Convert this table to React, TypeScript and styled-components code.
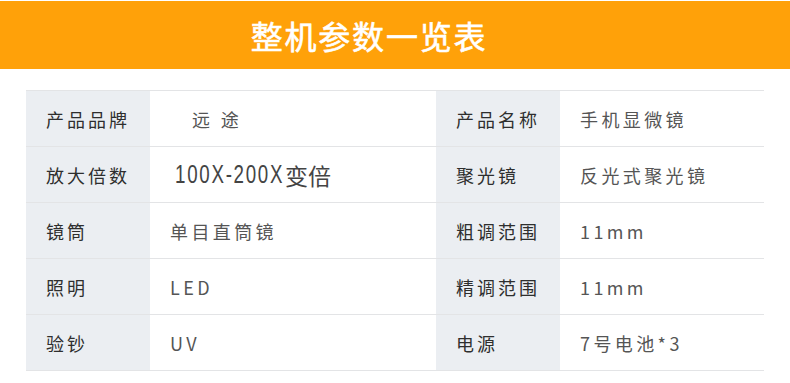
import React from 'react'
import styled, { createGlobalStyle } from 'styled-components'

const GlobalStyle = createGlobalStyle`
  html, body {
    margin: 0;
    padding: 0;
    background: #ffffff;
  }
  body {
    font-family: "Noto Sans CJK SC", "Noto Sans", sans-serif;
  }
`

const Page = styled.div`
  width: 790px;
  height: 383px;
  background: #fff;
  overflow: hidden;
`

const Banner = styled.header`
  height: 68px;
  margin-top: 1px;
  background: #ffa109;
  display: flex;
  align-items: center;
  justify-content: center;
`

const Title = styled.h1`
  margin: 0 52px 0 0;
  color: #fff;
  font-family: "Noto Sans CJK SC", sans-serif;
  font-size: 32px;
  font-weight: 400;
  -webkit-text-stroke: 0.6px #fff;
  letter-spacing: 1.8px;
  line-height: 1;
`

const Table = styled.div`
  margin: 21px 0 0 26px;
  width: 738px;
  display: grid;
  grid-template-columns: 124px 286px 124px 204px;
  grid-auto-rows: 56px;
  border-top: 1px solid #e3e4e6;
  border-right: 1px solid #e3e4e6;
  box-sizing: border-box;
`

const Cell = styled.div<{ $label?: boolean; $indent?: number }>`
  display: flex;
  align-items: center;
  padding-left: ${p => 20 + (p.$indent ?? 0)}px;
  background: ${p => (p.$label ? '#ebeef2' : '#ffffff')};
  color: ${p => (p.$label ? '#2e2e2e' : '#555555')};
  font-size: 18px;
  letter-spacing: ${p => (p.$label ? '3px' : '3.4px')};
  border-bottom: 1px solid #e3e4e6;
  white-space: nowrap;
`

const Zoom = styled.span`
  display: inline-flex;
  align-items: center;
  margin-left: 5px;
  color: #444;
`

/* the digits in the picture are a condensed face: squeeze them into their box */
const Squeezed = styled.span`
  display: inline-block;
  width: 110px;
  white-space: nowrap;

  & > span {
    display: inline-block;
    font-family: "Liberation Sans", sans-serif;
    font-size: 26px;
    letter-spacing: 2.4px;
    transform: scaleX(0.72);
    transform-origin: left center;
  }
`

const ZoomUnit = styled.span`
  font-size: 23px;
  letter-spacing: 0;
`

type Row = {
  l1: string
  v1: React.ReactNode
  indent?: number
  l2: string
  v2: React.ReactNode
}

const rows: Row[] = [
  { l1: '产品品牌', v1: '远 途', indent: 22, l2: '产品名称', v2: '手机显微镜' },
  {
    l1: '放大倍数',
    v1: (
      <Zoom>
        <Squeezed>
          <span>100X-200X</span>
        </Squeezed>
        <ZoomUnit>变倍</ZoomUnit>
      </Zoom>
    ),
    l2: '聚光镜',
    v2: '反光式聚光镜',
  },
  { l1: '镜筒', v1: '单目直筒镜', l2: '粗调范围', v2: '11mm' },
  { l1: '照明', v1: 'LED', l2: '精调范围', v2: '11mm' },
  { l1: '验钞', v1: 'UV', l2: '电源', v2: '7号电池*3' },
]

export default function App() {
  return (
    <Page>
      <GlobalStyle />
      <Banner>
        <Title>整机参数一览表</Title>
      </Banner>
      <Table>
        {rows.map(r => (
          <React.Fragment key={r.l1}>
            <Cell $label>{r.l1}</Cell>
            <Cell $indent={r.indent}>{r.v1}</Cell>
            <Cell $label>{r.l2}</Cell>
            <Cell>{r.v2}</Cell>
          </React.Fragment>
        ))}
      </Table>
    </Page>
  )
}
